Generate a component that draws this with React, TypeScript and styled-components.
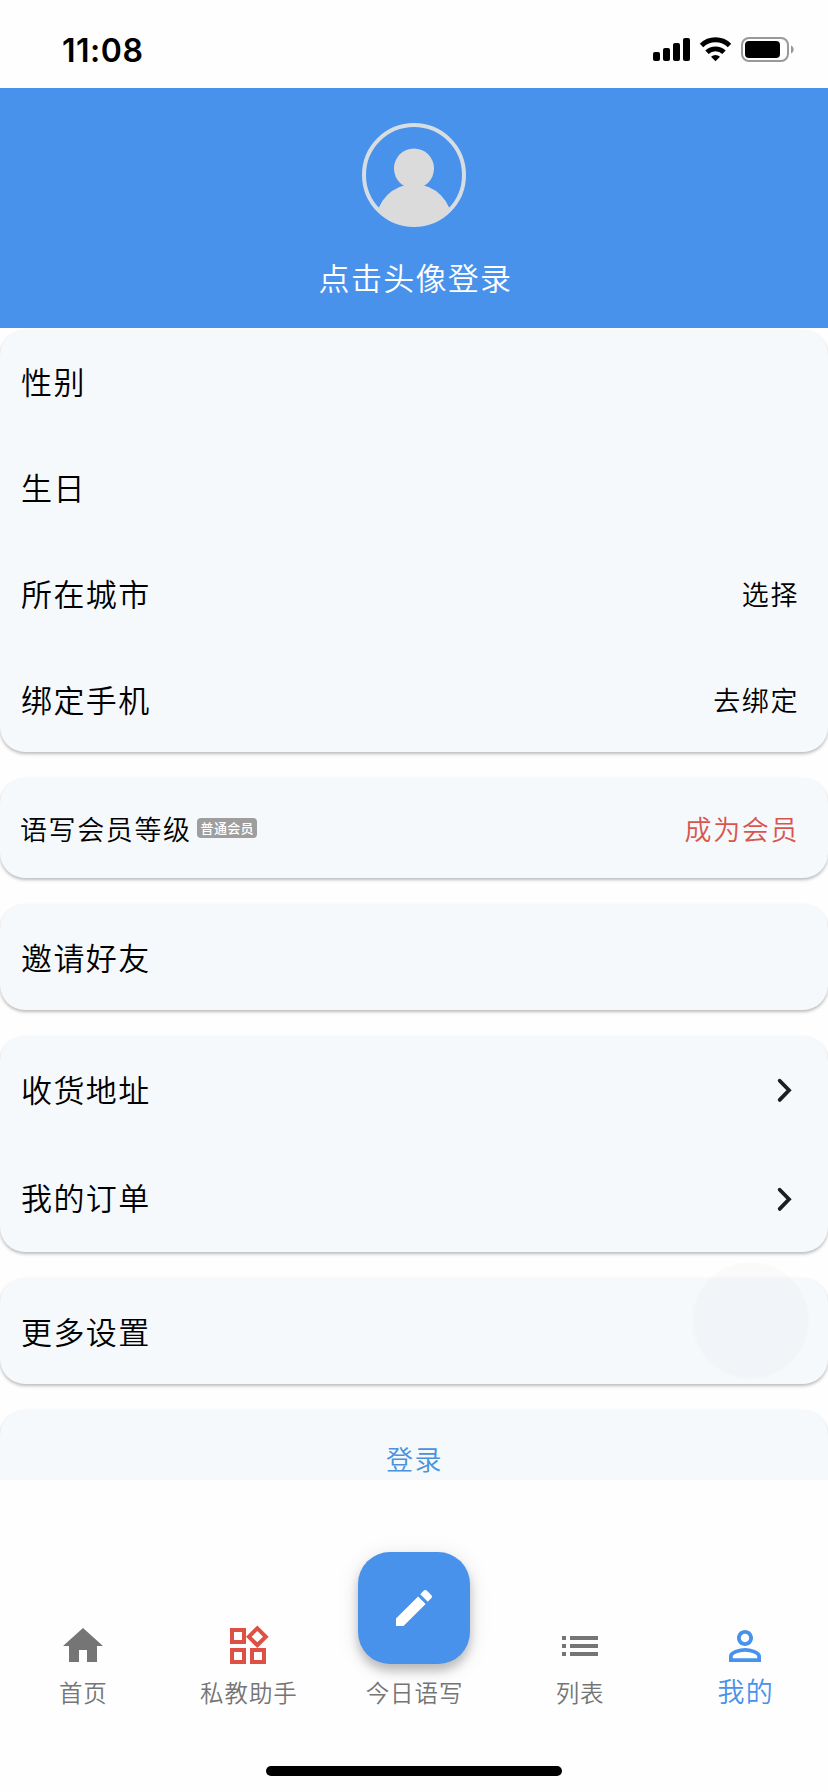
import React from 'react';
import styled, { createGlobalStyle, css } from 'styled-components';

const Global = createGlobalStyle`
  * { box-sizing: border-box; }
  body {
    margin: 0;
    background: #fefefe;
    font-family: "Noto Sans CJK SC", sans-serif;
    font-weight: 350;
    color: #000;
    overflow: hidden;
  }
`;

const Screen = styled.div`
  width: 828px;
  height: 1792px;
  display: flex;
  flex-direction: column;
  position: relative;
  overflow: hidden;
`;

const StatusBar = styled.header`
  flex: none;
  height: 88px;
  display: flex;
  align-items: center;
  justify-content: space-between;
  padding: 12px 32px 0 62px;
`;

const Clock = styled.time`
  font: 600 32px/36px Inter, sans-serif;
  letter-spacing: 0.5px;
  padding-top: 1px;
`;

const StatusIcons = styled.svg`
  display: block;
  width: 144px;
  height: 30px;
`;

const Profile = styled.section`
  flex: none;
  height: 240px;
  background: #4992ec;
  display: flex;
  flex-direction: column;
  align-items: center;
  padding-top: 35px;
`;

const Avatar = styled.svg`
  display: block;
  width: 104px;
  height: 104px;
`;

const LoginHint = styled.div`
  margin-top: 28px;
  padding-left: 3px;
  font-size: 31px;
  line-height: 44px;
  letter-spacing: 1.3px;
  color: #fff;
`;

const List = styled.main`
  flex: none;
  height: 1152px;
  overflow: hidden;
  display: flex;
  flex-direction: column;
  gap: 26px;
  padding-top: 2px;
`;

const Card = styled.section<{ $height: number }>`
  flex: none;
  height: ${(p) => p.$height}px;
  padding: 0 29px 0 20px;
  border-radius: 25px;
  background: #f5f9fc;
  box-shadow: 0 2px 3px rgba(0, 0, 0, 0.22), 0 2px 5px rgba(0, 0, 0, 0.05);
`;

const Row = styled.div<{ $height: number; $center?: boolean }>`
  height: ${(p) => p.$height}px;
  display: flex;
  align-items: center;
  justify-content: ${(p) => (p.$center ? 'center' : 'space-between')};
  ${(p) => p.$center && css`
    padding-left: 10px;
  `}
`;

const Label = styled.span<{ $small?: boolean }>`
  font-size: ${(p) => (p.$small ? 27 : 31)}px;
  letter-spacing: ${(p) => (p.$small ? 1.6 : 1.4)}px;
  line-height: 44px;
  padding: ${(p) => (p.$small ? '0 0 2px' : '0 0 5px 1px')};
`;

const Action = styled.span<{ $color?: string }>`
  font-size: 27px;
  letter-spacing: 1.6px;
  line-height: 40px;
  padding-bottom: 2px;
  color: ${(p) => p.$color ?? '#000'};
`;

const Level = styled.div`
  display: flex;
  align-items: center;
  gap: 5px;
`;

const Badge = styled.span`
  height: 20px;
  padding: 0 3px 0 4px;
  margin-bottom: 4px;
  border-radius: 4px;
  background: #9e9e9e;
  color: #fff;
  font-size: 13px;
  font-weight: 500;
  letter-spacing: 0.3px;
  line-height: 19px;
`;

const Chevron = styled.svg`
  width: 46px;
  height: 46px;
  margin-right: -9px;
  fill: none;
  stroke: #1c1e20;
`;

const TouchHalo = styled.div`
  position: absolute;
  left: 691px;
  top: 1261px;
  width: 119px;
  height: 119px;
  border-radius: 50%;
  background: radial-gradient(circle closest-side, rgba(130, 130, 190, 0.035) 0%, rgba(120, 120, 120, 0.032) 95%, transparent 100%);
`;

const TabBar = styled.nav`
  flex: none;
  margin-top: 130px;
  height: 182px;
  display: grid;
  grid-template-columns: repeat(5, 1fr);
  padding-top: 12px;
  position: relative;
`;

const Tab = styled.a<{ $active?: boolean }>`
  display: flex;
  flex-direction: column;
  align-items: center;
  color: ${(p) => (p.$active ? '#4992ec' : '#757575')};
  font-size: ${(p) => (p.$active ? 27 : 23.5)}px;
  letter-spacing: ${(p) => (p.$active ? 1.2 : 0.9)}px;
  font-weight: 350;
  line-height: 40px;

  span {
    padding-left: 1px;
    margin-top: ${(p) => (p.$active ? -3 : -2)}px;
  }
`;

const TabIcon = styled.svg<{ $color?: string }>`
  width: 48px;
  height: 48px;
  margin-bottom: 4px;
  fill: ${(p) => p.$color ?? 'currentColor'};
`;

const Compose = styled.button`
  position: absolute;
  left: 358px;
  top: -58px;
  width: 112px;
  height: 112px;
  padding: 0;
  border: 0;
  border-radius: 32px;
  background: #4992ec;
  box-shadow: 0 7px 10px rgba(0, 0, 0, 0.2), 0 4px 22px rgba(0, 0, 0, 0.12);
  display: flex;
  align-items: center;
  justify-content: center;
`;

const ComposeIcon = styled.svg`
  width: 48px;
  height: 48px;
  fill: #fff;
`;

const HomeIndicator = styled.div`
  position: absolute;
  left: 266px;
  bottom: 16px;
  width: 296px;
  height: 10px;
  border-radius: 5px;
  background: #000;
`;

const ICONS = {
  home: 'M10 20v-6h4v6h5v-8h3L12 3 2 12h3v8z',
  widgets:
    'M16.66 4.52l2.83 2.83-2.83 2.83-2.83-2.83 2.83-2.83M9 5v4H5V5h4m10 10v4h-4v-4h4M9 15v4H5v-4h4m7.66-13.31L11 7.34 16.66 13l5.66-5.66-5.66-5.65zM11 3H3v8h8V3zm10 10h-8v8h8v-8zm-10 0H3v8h8v-8z',
  list: 'M3 13h2v-2H3v2zm0 4h2v-2H3v2zm0-8h2V7H3v2zm4 4h14v-2H7v2zm0 4h14v-2H7v2zM7 7v2h14V7H7z',
  person:
    'M12 5.9c1.16 0 2.1.94 2.1 2.1s-.94 2.1-2.1 2.1S9.9 9.16 9.9 8s.94-2.1 2.1-2.1m0 9c2.97 0 6.1 1.46 6.1 2.1v1.1H5.9V17c0-.64 3.13-2.1 6.1-2.1M12 4C9.79 4 8 5.79 8 8s1.79 4 4 4 4-1.79 4-4-1.79-4-4-4zm0 9c-2.67 0-8 1.34-8 4v3h16v-3c0-2.66-5.33-4-8-4z',
  edit: 'M3 17.25V21h3.75L17.81 9.94l-3.75-3.75L3 17.25zM20.71 7.04c.39-.39.39-1.02 0-1.41l-2.34-2.34c-.39-.39-1.02-.39-1.41 0l-1.83 1.83 3.75 3.75 1.83-1.83z',
};

const Arrow = () => (
  <Chevron viewBox="0 0 46 46">
    <path d="M17.700 12.700 27 22.300l-9.300 9.600" strokeWidth="3.800" strokeLinecap="round" />
  </Chevron>
);

export default function App() {
  return (
    <Screen>
      <Global />
      <StatusBar>
        <Clock>11:08</Clock>
        <StatusIcons viewBox="652 35 144 30">
          <rect x="653" y="52" width="7" height="9" rx="2" />
          <rect x="663" y="48" width="7" height="13" rx="2" />
          <rect x="673" y="43" width="7" height="18" rx="2" />
          <rect x="683" y="38" width="7" height="23" rx="2" />
          <g fill="none" stroke="#000" strokeWidth="4.9">
            <path d="M701.500 45.500a20 20 0 0 1 28 0" />
            <path d="M707 52.300a12.300 12.300 0 0 1 17 0" />
          </g>
          <path d="M711 56.700a7 7 0 0 1 9 0l-4.500 4.500z" />
          <rect x="742" y="38" width="46" height="23" rx="7" fill="none" stroke="#999" strokeWidth="2" />
          <rect x="745" y="41" width="35" height="17" rx="4" />
          <path d="M791 45.500v8c3.600-1.600 3.600-6.400 0-8z" fill="#999" />
        </StatusIcons>
      </StatusBar>

      <Profile>
        <Avatar viewBox="0 0 104 104" fill="#dbdbdb">
          <clipPath id="face">
            <circle cx="52" cy="52" r="51" />
          </clipPath>
          <circle cx="52" cy="52" r="50" fill="none" stroke="#d6dde3" strokeWidth="4" />
          <g clipPath="url(#face)">
            <circle cx="52" cy="45.500" r="20" />
            <circle cx="52" cy="99" r="38" />
          </g>
        </Avatar>
        <LoginHint>点击头像登录</LoginHint>
      </Profile>

      <List>
        <Card $height={422}>
          <Row $height={106}><Label>性别</Label></Row>
          <Row $height={106}><Label>生日</Label></Row>
          <Row $height={106}><Label>所在城市</Label><Action>选择</Action></Row>
          <Row $height={106}><Label>绑定手机</Label><Action>去绑定</Action></Row>
        </Card>
        <Card $height={100}>
          <Row $height={103}>
            <Level>
              <Label $small>语写会员等级</Label>
              <Badge>普通会员</Badge>
            </Level>
            <Action $color="#d9564e">成为会员</Action>
          </Row>
        </Card>
        <Card $height={106}>
          <Row $height={111}><Label>邀请好友</Label></Row>
        </Card>
        <Card $height={216}>
          <Row $height={110}><Label>收货地址</Label><Arrow /></Row>
          <Row $height={107}><Label>我的订单</Label><Arrow /></Row>
        </Card>
        <Card $height={106}>
          <Row $height={111}><Label>更多设置</Label></Row>
        </Card>
        <Card $height={106}>
          <Row $height={99} $center><Action $color="#4992dc">登录</Action></Row>
        </Card>
      </List>
      <TouchHalo />

      <TabBar>
        <Tab>
          <TabIcon viewBox="0 0 24 24"><path d={ICONS.home} /></TabIcon>
          <span>首页</span>
        </Tab>
        <Tab>
          <TabIcon viewBox="0 0 24 24" $color="#dd5144"><path d={ICONS.widgets} /></TabIcon>
          <span>私教助手</span>
        </Tab>
        <Tab>
          <TabIcon as="div" />
          <span>今日语写</span>
        </Tab>
        <Tab>
          <TabIcon viewBox="0 0 24 24"><path d={ICONS.list} /></TabIcon>
          <span>列表</span>
        </Tab>
        <Tab $active>
          <TabIcon viewBox="0 0 24 24"><path d={ICONS.person} /></TabIcon>
          <span>我的</span>
        </Tab>
        <Compose aria-label="今日语写">
          <ComposeIcon viewBox="0 0 24 24"><path d={ICONS.edit} /></ComposeIcon>
        </Compose>
      </TabBar>
      <HomeIndicator />
    </Screen>
  );
}
